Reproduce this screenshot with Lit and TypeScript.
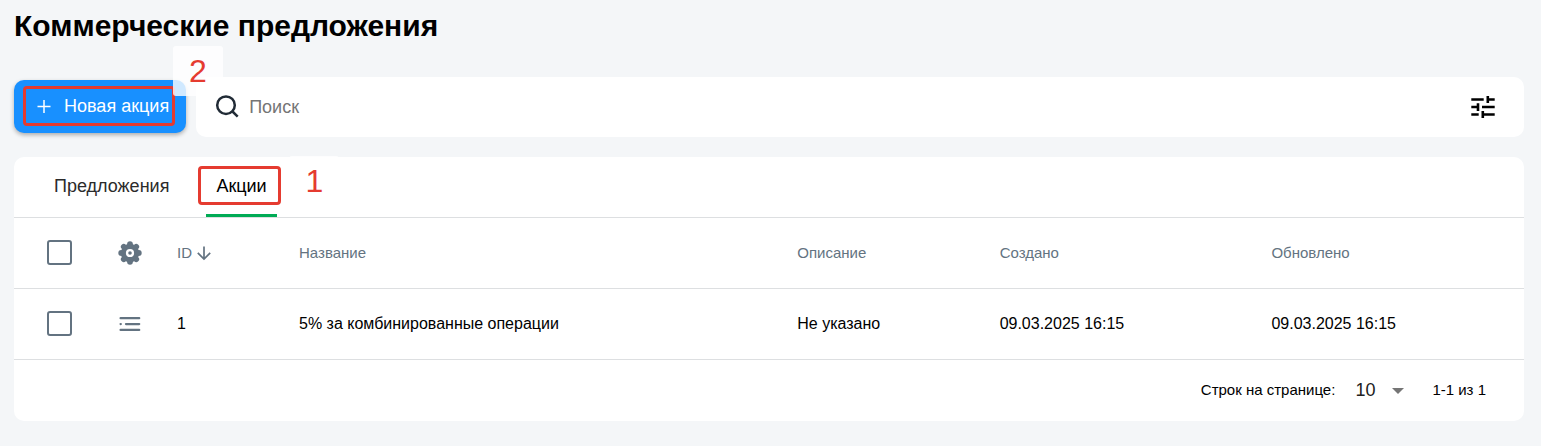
import { LitElement, html, css, svg } from "lit";
import { customElement, state } from "lit/decorators.js";

interface Promo {
  id: number;
  name: string;
  description: string;
  created: string;
  updated: string;
}

const plusIcon = svg`<svg width="18" height="18" viewBox="0 0 18 18" fill="none" stroke="currentColor" stroke-width="1.5" aria-hidden="true"><path d="M9 3v13M2.5 9.5h13"/></svg>`;

const searchIcon = svg`<svg width="24" height="24" viewBox="0 0 24 24" fill="none" stroke="#212b36" stroke-width="2.5" aria-hidden="true"><circle cx="11" cy="10.2" r="8.8"/><path d="M17 16l5.7 5.6"/></svg>`;

const tuneIcon = svg`<svg width="24" height="24" viewBox="0 0 24 24" fill="none" stroke="#000" stroke-width="2.6" aria-hidden="true"><path d="M.3 4.5h12.4M16.8 1v7M16.8 4.5h6.9M.3 12h6.6M7 8.3v7.6M11 12h12.7M.3 19.5h7.4M11.8 16v7M11.8 19.5h11.9"/></svg>`;

const gearIcon = svg`<svg width="24" height="24" viewBox="0 0 24 24" fill="#637381" aria-hidden="true"><circle cx="12" cy="12" r="9.2"/>${[0, 45, 90, 135, 180, 225, 270, 315].map(
  (a) => svg`<circle cx="12" cy="3.2" r="2.9" transform="rotate(${a} 12 12)"/>`
)}<circle cx="12" cy="12" r="4.1" fill="#fff"/><circle cx="12" cy="12" r="1.8"/></svg>`;

const listIcon = svg`<svg width="24" height="24" viewBox="0 0 24 24" fill="none" stroke="#637381" stroke-width="2.3" stroke-linecap="round" aria-hidden="true"><path d="M2.6 6.2h18.6M8 12.1h13.2M2.6 12.1h.2M2.6 17.9h18.6"/></svg>`;

const arrowIcon = svg`<svg width="16" height="16" viewBox="0 0 16 16" fill="none" stroke="#637381" stroke-width="1.7" aria-hidden="true"><path d="M8 1.5v12.5M1.8 7.9L8 14.1l6.2-6.2"/></svg>`;

@customElement("app-root")
export class AppRoot extends LitElement {
  @state() private rows: Promo[] = [
    {
      id: 1,
      name: "5% за комбинированные операции",
      description: "Не указано",
      created: "09.03.2025 16:15",
      updated: "09.03.2025 16:15",
    },
  ];

  static styles = css`
    :host {
      display: block;
      box-sizing: border-box;
      min-height: 100vh;
      padding: 8px 17px 24px 14px;
      background: #f4f6f8;
      color: #000;
      font: 16px/24px "Liberation Sans", Arial, sans-serif;
    }
    * {
      box-sizing: border-box;
    }
    button,
    input,
    select {
      font: inherit;
      color: inherit;
      margin: 0;
    }
    button {
      border: 0;
      padding: 0;
      background: none;
      cursor: pointer;
    }
    svg {
      display: block;
      flex: none;
    }
    .title {
      margin: 0 0 33px;
      font-size: 30px;
      line-height: 36px;
      font-weight: 700;
    }
    .toolbar {
      display: flex;
      align-items: center;
      gap: 10px;
      margin-bottom: 20px;
    }
    .create {
      position: relative;
      display: flex;
      align-items: center;
      gap: 11px;
      height: 53px;
      margin-bottom: 1px;
      padding: 0 17px 1px 21px;
      border-radius: 10px;
      background: #1890ff;
      box-shadow: 0 2px 4px rgba(0, 0, 0, 0.3);
      color: #fff;
      font-size: 18px;
      white-space: nowrap;
    }
    .search {
      flex: 1;
      display: flex;
      align-items: center;
      gap: 10px;
      height: 60px;
      padding: 0 29px 0 19px;
      border-radius: 10px;
      background: #fff;
    }
    .search-label {
      flex: 1;
      display: flex;
      align-items: center;
      gap: 10px;
    }
    .search-input {
      flex: 1;
      min-width: 0;
      border: 0;
      padding: 0;
      outline: 0;
      background: none;
      font-size: 18px;
    }
    .search-input::placeholder {
      color: #757575;
      opacity: 1;
    }
    .card {
      border-radius: 10px;
      background: #fff;
    }
    .tabs {
      display: flex;
      gap: 37px;
      height: 61px;
      padding: 0 40px;
      border-bottom: 1px solid #dddfe1;
    }
    .tab {
      position: relative;
      border-bottom: 3px solid transparent;
      color: #2b2b2b;
      font-size: 18px;
    }
    .tab.active {
      padding: 0 10px;
      border-bottom-color: #00ab55;
      color: #000;
    }
    .frame {
      position: absolute;
      border: 3px solid #e53b30;
      border-radius: 4px;
      pointer-events: none;
    }
    .create .frame {
      inset: 6px 11px 7px 9px;
    }
    .tab .frame {
      inset: 9px -4px 9px -8px;
    }
    .step {
      position: absolute;
      width: 50px;
      height: 50px;
      border-radius: 3px;
      background: rgba(255, 255, 255, 0.8);
      color: #e53b30;
      font-size: 32px;
      line-height: 50px;
      text-align: center;
      pointer-events: none;
    }
    .create .step {
      left: 159px;
      top: -34px;
    }
    .tab .step {
      left: 83px;
      top: -1px;
    }
    .grid {
      width: 100%;
      table-layout: fixed;
      border-collapse: separate;
      border-spacing: 0;
    }
    .grid th,
    .grid td {
      height: 71px;
      padding: 0;
      border-bottom: 1px solid #dddfe1;
      text-align: left;
      font-weight: 400;
    }
    .grid th {
      color: #637381;
      font-size: 15px;
    }
    .col-check {
      width: 92px;
    }
    .col-tools {
      width: 71px;
    }
    .col-id {
      width: 122px;
    }
    .col-text {
      width: 33%;
    }
    .col-note {
      width: 13.4%;
    }
    .col-date {
      width: 18%;
    }
    .check {
      appearance: none;
      display: block;
      width: 25px;
      height: 25px;
      margin: 0 0 1px 33px;
      border: 2px solid #637381;
      border-radius: 3px;
    }
    .check:checked {
      background: #637381;
    }
    .icon {
      display: block;
    }
    .tools {
      margin-left: 12px;
    }
    .sort {
      display: flex;
      align-items: center;
      gap: 4px;
    }
    .footer {
      display: flex;
      justify-content: flex-end;
      align-items: center;
      height: 61px;
      padding: 0 38px 1px 0;
      font-size: 15px;
    }
    .pager {
      position: relative;
      display: flex;
      align-items: center;
      gap: 20px;
      margin-right: 28px;
    }
    .pager-select {
      appearance: none;
      width: 49px;
      border: 0;
      padding: 0;
      background: none;
      color: #212121;
      font-size: 18px;
    }
    .caret {
      position: absolute;
      right: 0;
      top: 10px;
      border: 6px solid transparent;
      border-top-color: #757575;
      border-bottom: 0;
      pointer-events: none;
    }
  `;

  render() {
    return html`
      <h1 class="title">Коммерческие предложения</h1>
      <div class="toolbar">
        <button class="create" type="button">
          ${plusIcon}<span>Новая акция</span>
          <span class="frame"></span>
          <span class="step">2</span>
        </button>
        <div class="search">
          <label class="search-label">
            ${searchIcon}
            <input class="search-input" type="search" placeholder="Поиск" />
          </label>
          <button class="icon" type="button" aria-label="Фильтры">${tuneIcon}</button>
        </div>
      </div>
      <section class="card">
        <div class="tabs" role="tablist">
          <button class="tab" type="button" role="tab" aria-selected="false">Предложения</button>
          <button class="tab active" type="button" role="tab" aria-selected="true">
            Акции
            <span class="frame"></span>
            <span class="step">1</span>
          </button>
        </div>
        <table class="grid">
          <colgroup>
            <col class="col-check" />
            <col class="col-tools" />
            <col class="col-id" />
            <col class="col-text" />
            <col class="col-note" />
            <col class="col-date" />
            <col />
          </colgroup>
          <thead>
            <tr>
              <th><input class="check" type="checkbox" aria-label="Выбрать все" /></th>
              <th><button class="icon tools" type="button" aria-label="Настройки">${gearIcon}</button></th>
              <th aria-sort="descending"><button class="sort" type="button">ID ${arrowIcon}</button></th>
              <th>Название</th>
              <th>Описание</th>
              <th>Создано</th>
              <th>Обновлено</th>
            </tr>
          </thead>
          <tbody>
            ${this.rows.map(
              (r) => html`<tr>
                <td><input class="check" type="checkbox" aria-label="Выбрать строку" /></td>
                <td><button class="icon tools" type="button" aria-label="Действия">${listIcon}</button></td>
                <td>${r.id}</td>
                <td>${r.name}</td>
                <td>${r.description}</td>
                <td>${r.created}</td>
                <td>${r.updated}</td>
              </tr>`
            )}
          </tbody>
        </table>
        <div class="footer">
          <div class="pager">
            <label for="page-size">Строк на странице:</label>
            <select class="pager-select" id="page-size">
              <option>10</option>
              <option>25</option>
              <option>50</option>
            </select>
            <span class="caret"></span>
          </div>
          <span>1-1 из 1</span>
        </div>
      </section>
    `;
  }
}
